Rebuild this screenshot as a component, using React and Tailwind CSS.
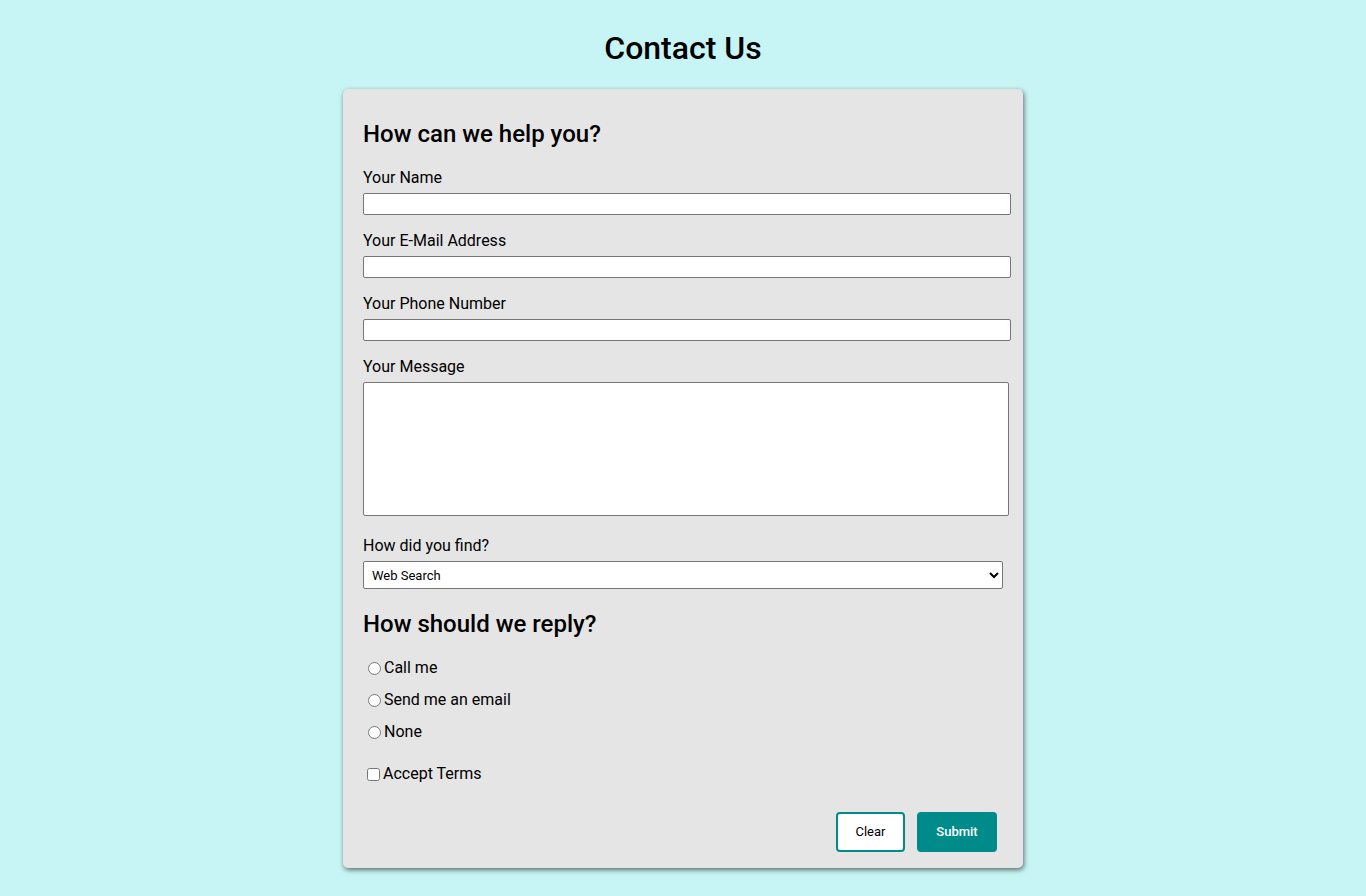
export default function App() {
  const inputCls =
    "block mt-[5px] w-[648px] h-[22px] bg-white border border-[#767676] rounded-[2px] px-[2px] text-[13px]";

  return (
    <div className="min-h-screen bg-[#c7f4f4] pt-[29px] pb-[28px] font-['Roboto',sans-serif] text-black">
      <h1 className="text-center text-[32px] leading-[38px] font-medium">Contact Us</h1>

      <form
        className="w-[680px] mx-auto mt-[22px] bg-[#e5e5e5] rounded-[5px] shadow-[1px_2px_5px_rgba(0,0,0,0.55)] px-[20px] pt-[31px] pb-[16px]"
        onSubmit={(e) => e.preventDefault()}
      >
        <h2 className="text-[24px] leading-[28px] font-medium">How can we help you?</h2>

        <label className="block mt-[20px] text-[16px] leading-[20px]">
          Your Name
          <input type="text" className={inputCls} />
        </label>

        <label className="block mt-[16px] text-[16px] leading-[20px]">
          Your E-Mail Address
          <input type="email" className={inputCls} />
        </label>

        <label className="block mt-[16px] text-[16px] leading-[20px]">
          Your Phone Number
          <input type="tel" className={inputCls} />
        </label>

        <label className="block mt-[16px] text-[16px] leading-[20px]">
          Your Message
          <textarea className="block mt-[5px] w-[646px] h-[134px] bg-white border border-[#767676] rounded-[2px] p-[2px] text-[13px] resize-none" />
        </label>

        <label className="block mt-[20px] text-[16px] leading-[20px]">
          How did you find?
          <select
            defaultValue="web"
            className="block mt-[5px] w-[640px] h-[28px] bg-white border border-[#767676] rounded-[2px] pl-[4px] text-[13px] text-black"
          >
            <option value="web">Web Search</option>
            <option value="friend">Friend</option>
            <option value="social">Social Media</option>
            <option value="other">Other</option>
          </select>
        </label>

        <h2 className="mt-[21px] text-[24px] leading-[28px] font-medium">How should we reply?</h2>

        <div className="mt-[20px] flex flex-col gap-[12px] text-[16px] leading-[20px]">
          <label className="flex items-center">
            <input type="radio" name="reply" className="ml-[5px] mr-[3px] w-[13px] h-[13px]" />
            Call me
          </label>
          <label className="flex items-center">
            <input type="radio" name="reply" className="ml-[5px] mr-[3px] w-[13px] h-[13px]" />
            Send me an email
          </label>
          <label className="flex items-center">
            <input type="radio" name="reply" className="ml-[5px] mr-[3px] w-[13px] h-[13px]" />
            None
          </label>
        </div>

        <label className="mt-[22px] flex items-center text-[16px] leading-[20px]">
          <input type="checkbox" className="ml-[4px] mr-[3px] w-[13px] h-[13px]" />
          Accept Terms
        </label>

        <div className="mt-[28px] mr-[6px] flex justify-end gap-[12px]">
          <button
            type="reset"
            className="w-[69px] h-[40px] bg-white border-2 border-[#008b8b] rounded-[4px] text-[13px] text-black"
          >
            Clear
          </button>
          <button
            type="submit"
            className="w-[80px] h-[40px] bg-[#008b8b] border-2 border-[#008b8b] rounded-[4px] text-[13px] font-medium text-white"
          >
            Submit
          </button>
        </div>
      </form>
    </div>
  );
}
